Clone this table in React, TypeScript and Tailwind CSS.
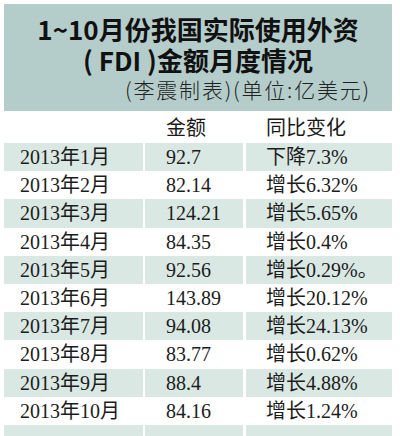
const rows = [
  ["2013年1月", "92.7", "下降7.3%"],
  ["2013年2月", "82.14", "增长6.32%"],
  ["2013年3月", "124.21", "增长5.65%"],
  ["2013年4月", "84.35", "增长0.4%"],
  ["2013年5月", "92.56", "增长0.29%。"],
  ["2013年6月", "143.89", "增长20.12%"],
  ["2013年7月", "94.08", "增长24.13%"],
  ["2013年8月", "83.77", "增长0.62%"],
  ["2013年9月", "88.4", "增长4.88%"],
  ["2013年10月", "84.16", "增长1.24%"],
];

const serif = { fontFamily: '"Liberation Serif", "Noto Sans CJK SC", serif' };

export default function App() {
  return (
    <div className="w-[400px] h-[436px] bg-white overflow-hidden pl-[4px] pt-[4px]">
      {/* title panel */}
      <div className="w-[388px] h-[107px] bg-[#b5cdca] flex flex-col items-center text-[#111] font-['Noto_Sans_CJK_SC',sans-serif]">
        <div className="mt-[9px] h-[31px] leading-[31px] text-[26px] font-bold">1~10月份我国实际使用外资</div>
        <div className="h-[31px] leading-[31px] text-[26px] font-bold">( FDI )金额月度情况</div>
        <div className="self-end mr-[21px] h-[28px] leading-[28px] text-[21px] font-light tracking-[1.8px] text-[#222]">
          (李震制表)(单位:亿美元)
        </div>
      </div>

      {/* column heads */}
      <div className="w-[388px] h-[32px] flex items-center text-[20px] text-[#1a1a1a] font-['Noto_Sans_CJK_SC',sans-serif]">
        <div className="w-[141px]" />
        <div className="w-[100px] pl-[21px]">金额</div>
        <div className="pl-[21px]">同比变化</div>
      </div>

      {rows.map((r, i) => {
        const bg = i % 2 === 0 ? "bg-[#dae8e3]" : "bg-white";
        return (
          <div key={r[0]} className="w-[388px] h-[28.2px] flex gap-[2px] text-[20px] text-[#1c1c1c]" style={serif}>
            <div className={`w-[139px] ${bg} pl-[16px] flex items-center`}>{r[0]}</div>
            <div className={`w-[98px] ${bg} pl-[21px] flex items-center`}>{r[1]}</div>
            <div className={`flex-1 ml-[1px] ${bg} pl-[20px] flex items-center`}>{r[2]}</div>
          </div>
        );
      })}
      <div className="w-[388px] h-[20px] flex gap-[2px]">
        <div className="w-[139px] bg-[#dae8e3]" />
        <div className="w-[98px] bg-[#dae8e3]" />
        <div className="flex-1 ml-[1px] bg-[#dae8e3]" />
      </div>
    </div>
  );
}
